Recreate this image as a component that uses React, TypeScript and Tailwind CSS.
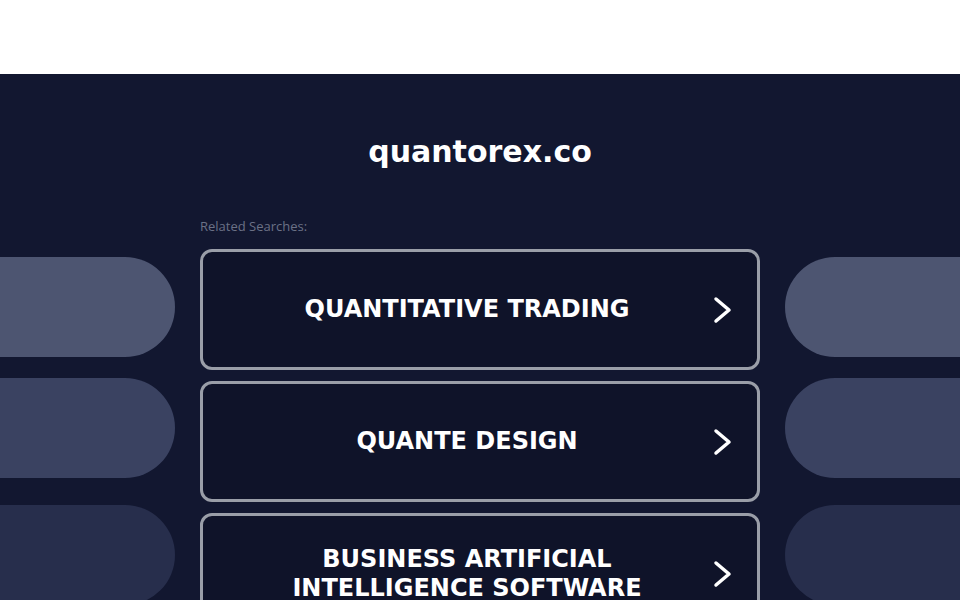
import React from "react";

const searches = [
  "QUANTITATIVE TRADING",
  "QUANTE DESIGN",
  "BUSINESS ARTIFICIAL INTELLIGENCE SOFTWARE",
];

function Chevron() {
  return (
    <svg width="22" height="28" viewBox="0 0 22 28" className="shrink-0">
      <path d="M5 3 L18 14 L5 25" fill="none" stroke="#ffffff" strokeWidth="3.5" strokeLinecap="round" strokeLinejoin="round" />
    </svg>
  );
}

function SidePills({ side }: { side: "left" | "right" }) {
  const shape = side === "left" ? "rounded-r-full" : "rounded-l-full";
  return (
    <div className="flex w-[175px] shrink-0 flex-col pt-[8px]">
      <div className={`h-[100px] bg-[#4d5571] ${shape}`} />
      <div className={`mt-[21px] h-[100px] bg-[#3a4261] ${shape}`} />
      <div className={`mt-[27px] h-[100px] bg-[#272e4c] ${shape}`} />
    </div>
  );
}

export default function App() {
  return (
    <div className="h-[600px] w-[960px] overflow-hidden bg-white" style={{ fontFamily: "'DejaVu Sans', sans-serif" }}>
      <div className="h-[74px] bg-white" />
      <div className="h-[526px] bg-[#121730]">
        <h1 className="pt-[58px] text-center text-[30px] font-bold leading-[40px] text-white">quantorex.co</h1>

        <div className="mx-auto mt-[46px] w-[560px] text-[13px] leading-[16px] text-[#6b7186]" style={{ fontFamily: "'Open Sans', sans-serif" }}>
          Related Searches:
        </div>

        <div className="mt-[15px] flex justify-between">
          <SidePills side="left" />
          <div className="flex w-[560px] flex-col gap-[11px]">
            {searches.map((s) => (
              <div
                key={s}
                className="flex h-[121px] items-center rounded-[12px] border-[3px] border-[#9a9ea8] bg-[#0f1329] pl-[28px] pr-[24px]"
              >
                <span className="flex-1 text-center text-[24px] font-bold leading-[29px] text-white">{s}</span>
                <span className="ml-[8px] flex">
                  <Chevron />
                </span>
              </div>
            ))}
          </div>
          <SidePills side="right" />
        </div>
      </div>
    </div>
  );
}
